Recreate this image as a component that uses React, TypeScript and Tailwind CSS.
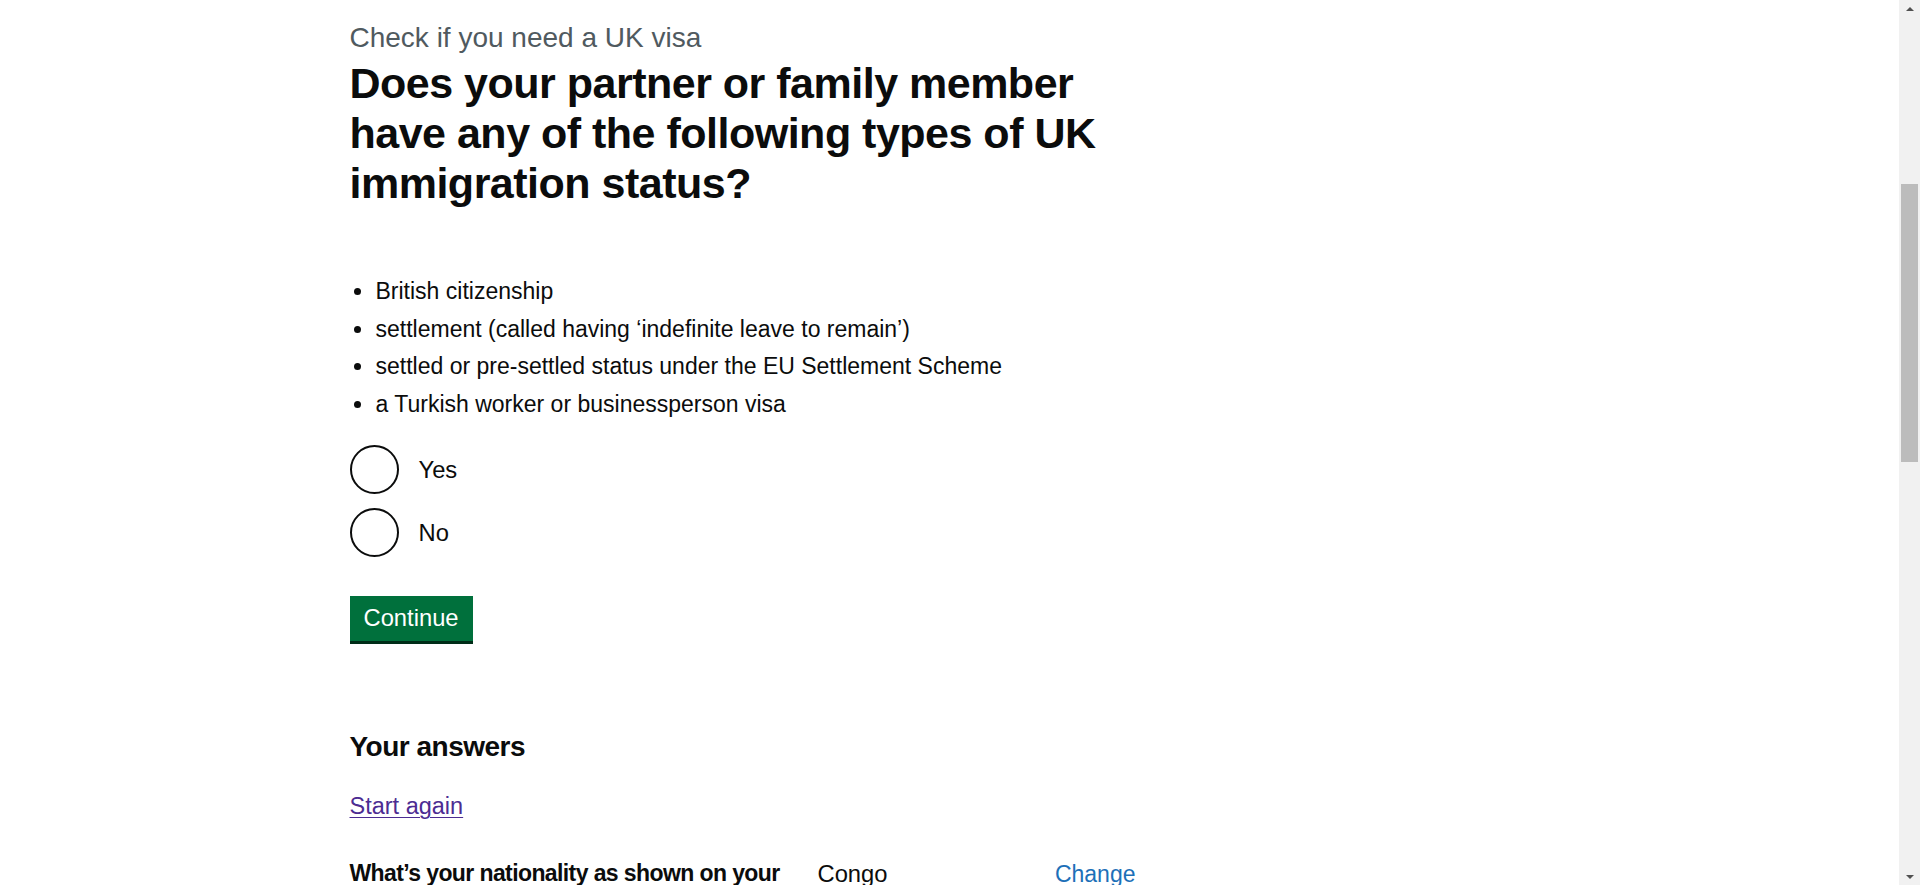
import React from 'react'

const font = { fontFamily: '"Liberation Sans", Arial, sans-serif' }

const statuses = [
  'British citizenship',
  'settlement (called having ‘indefinite leave to remain’)',
  'settled or pre-settled status under the EU Settlement Scheme',
  'a Turkish worker or businessperson visa'
]

const Radio = ({ label }: { label: string }) => (
  <div className="flex items-center h-[50px] mb-[12.5px]">
    <span className="w-[49px] h-[49px] rounded-full border-[2.5px] border-[#0b0c0c] bg-white shrink-0" />
    <span className="pl-[20px] text-[23.75px] leading-[31px] text-[#0b0c0c]">{label}</span>
  </div>
)

const Scrollbar = () => (
  <div className="w-[21px] h-[885px] bg-[#f1f1f1] flex flex-col items-center shrink-0">
    {/* up arrow */}
    <div className="h-[17px] flex items-center justify-center">
      <span className="w-0 h-0 border-l-[4px] border-r-[4px] border-b-[4px] border-l-transparent border-r-transparent border-b-[#505050]" />
    </div>
    <div className="mt-[167px] w-[17px] h-[278px] bg-[#bcbcbc]" />
    <div className="flex-1" />
    <div className="h-[17px] flex items-center justify-center">
      <span className="w-0 h-0 border-l-[4px] border-r-[4px] border-t-[4px] border-l-transparent border-r-transparent border-t-[#505050]" />
    </div>
  </div>
)

const App = () => {
  return (
    <div className="flex w-[1920px] h-[885px] overflow-hidden bg-white" style={font}>
      <div className="flex-1 h-[885px] overflow-hidden">
        <main className="w-[1200px] mx-auto pt-[19px] text-[#0b0c0c]">
          {/* Question */}
          <span className="block text-[28px] leading-[37.5px] text-[#505a5f]">
            Check if you need a UK visa
          </span>
          <h1 className="mt-[1.5px] text-[43px] leading-[50px] font-bold tracking-[-0.5px] whitespace-nowrap">
            Does your partner or family member
            <br />
            have any of the following types of UK
            <br />
            immigration status?
          </h1>

          <ul className="mt-[68px] list-disc pl-[25px] text-[23px] leading-[31.25px]">
            {statuses.map((s) => (
              <li key={s} className="mb-[6.25px] pl-[1px]">
                {s}
              </li>
            ))}
          </ul>

          <div className="mt-[25px]">
            <Radio label="Yes" />
            <Radio label="No" />
          </div>

          <button className="mt-[26px] h-[45px] px-[14px] bg-[#00703c] text-white text-[23.75px] leading-none shadow-[0_3px_0_#002d18]">
            Continue
          </button>

          {/* Answers */}
          <h2 className="mt-[90.5px] text-[28px] leading-[31.25px] font-bold tracking-[-0.5px]">
            Your answers
          </h2>
          <a
            href="#"
            className="block w-fit mt-[28.5px] text-[23.5px] leading-[31.25px] text-[#4c2c92] underline underline-offset-[3px] decoration-1"
          >
            Start again
          </a>

          <dl className="mt-[36px] flex w-[786px] text-[23.75px] leading-[31.25px]">
            <dt className="w-[468px] pr-[30px] font-bold text-[23px] tracking-[-0.6px] whitespace-nowrap">
              What’s your nationality as shown on your
              <br />
              passport or travel document?
            </dt>
            <dd className="flex-1">Congo</dd>
            <dd className="text-right">
              <a href="#" className="text-[#1d70b8] text-[23px]">
                Change
              </a>
            </dd>
          </dl>
        </main>
      </div>
      <Scrollbar />
    </div>
  )
}

export default App
